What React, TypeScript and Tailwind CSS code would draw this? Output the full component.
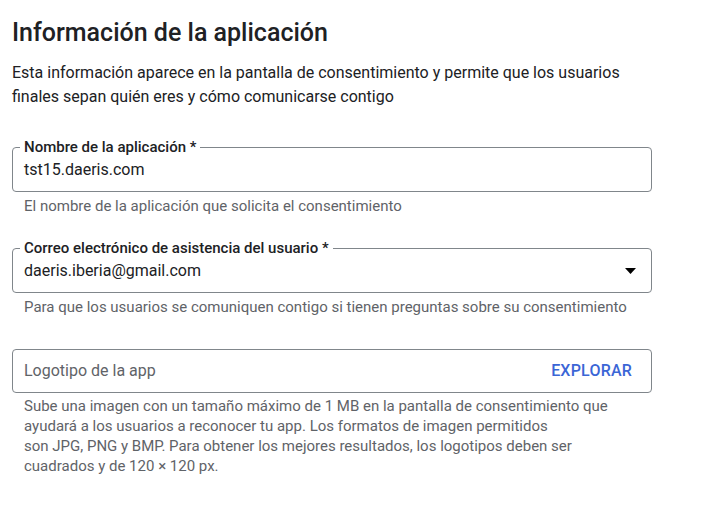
import React from "react";

const font = { fontFamily: "Roboto, 'Noto Sans', Arial, sans-serif" };

function OutlinedField({ label, value, select }: { label: string; value: string; select?: boolean }) {
  return (
    <fieldset className="m-0 h-[53px] rounded-[4px] border border-[#80868b] pl-[11px] pr-4 pt-0 pb-0">
      <legend className="ml-[-4px] px-1 text-[15px] font-medium leading-4 text-[#202124]">{label}</legend>
      <div className="flex h-[29px] items-center justify-between">
        <span className="text-[16px] leading-6 text-[#202124]">{value}</span>
        {select && (
          <svg width="11" height="6" viewBox="0 0 11 6" className="mr-[-1px]">
            <path d="M0 0 L11 0 L5.5 6 Z" fill="#000" />
          </svg>
        )}
      </div>
    </fieldset>
  );
}

function Helper({ children }: { children: React.ReactNode }) {
  return <p className="mt-1 pl-3 text-[15px] leading-5 text-[#5f6368]">{children}</p>;
}

export default function App() {
  return (
    <div className="min-h-screen bg-white" style={font}>
      <div className="ml-3 w-[640px] pt-[17px]">
        <h1 className="text-[25px] leading-8 font-medium text-[#202124]">Información de la aplicación</h1>
        <p className="mt-[12px] text-[16px] leading-6 text-[#202124]">
          Esta información aparece en la pantalla de consentimiento y permite que los usuarios finales sepan quién
          eres y cómo comunicarse contigo
        </p>

        <div className="mt-[30px]">
          <OutlinedField label="Nombre de la aplicación *" value="tst15.daeris.com" />
          <Helper>El nombre de la aplicación que solicita el consentimiento</Helper>
        </div>

        <div className="mt-[24px]">
          <OutlinedField label="Correo electrónico de asistencia del usuario *" value="daeris.iberia@gmail.com" select />
          <Helper>Para que los usuarios se comuniquen contigo si tienen preguntas sobre su consentimiento</Helper>
        </div>

        <div className="mt-[32px]">
          <div className="flex h-[44px] items-center justify-between rounded-[4px] border border-[#80868b] pl-[11px] pr-[19px]">
            <span className="text-[16px] leading-6 text-[#5f6368]">Logotipo de la app</span>
            <button className="text-[16px] font-medium tracking-[0.2px] text-[#3b66d6]">EXPLORAR</button>
          </div>
          <p className="mt-[3px] w-[612px] pl-3 text-[15px] leading-5 text-[#5f6368]">
            Sube una imagen con un tamaño máximo de 1 MB en la pantalla de consentimiento que ayudará a los usuarios
            a reconocer tu app. Los formatos de imagen permitidos
            <br />
            son JPG, PNG y BMP. Para obtener los mejores resultados, los logotipos deben ser cuadrados y de 120 × 120 px.
          </p>
        </div>
      </div>
    </div>
  );
}
